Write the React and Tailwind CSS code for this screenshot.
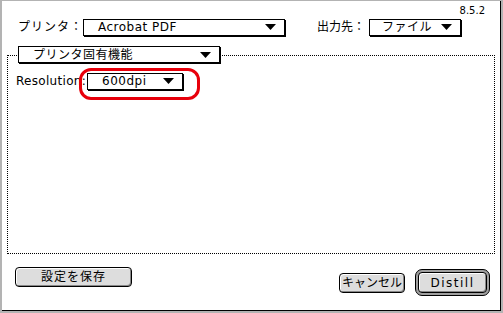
import React from "react";

const FONT = { fontFamily: '"DejaVu Sans", "Noto Sans CJK JP", sans-serif' };

function Tri() {
  return (
    <svg width="11" height="6" viewBox="0 0 11 6" className="shrink-0">
      <polygon points="0,0 11,0 5.5,6" fill="black" />
    </svg>
  );
}

// Mac OS classic popup menu: black frame with a 1px drop shadow
function Popup({ label, width, textPad = 14 }) {
  return (
    <div
      className="h-[17px] border border-black bg-white shadow-[1px_1px_0_#000] flex items-center justify-between pr-[8px] text-[12px] leading-none tracking-[0.5px]"
      style={{ width, paddingLeft: textPad }}
    >
      <span className="whitespace-nowrap">{label}</span>
      <Tri />
    </div>
  );
}

function Button({ children, className = "" }) {
  return (
    <div
      className={
        "h-[20px] border border-black rounded-[4px] bg-[#dddddd] shadow-[inset_1px_1px_0_#ffffff,inset_-1px_-1px_0_#888888] flex items-center justify-center text-[12px] leading-none whitespace-nowrap " +
        className
      }
    >
      {children}
    </div>
  );
}

export default function App() {
  return (
    <div className="w-[503px] h-[313px] bg-[#b3b3b3] pt-px pl-[2px] pr-[2px] pb-[2px]" style={FONT}>
      <div className="h-full bg-white border-r border-b border-black flex flex-col text-black">
        {/* version */}
        <div className="h-[17px] flex justify-end items-start pr-[15px] pt-[5px] text-[10px] leading-none">8.5.2</div>

        {/* printer / destination row */}
        <div className="flex items-center h-[18px] pl-[16px]">
          <span className="text-[12px] w-[65px] tracking-[1px] whitespace-nowrap">プリンタ：</span>
          <Popup label="Acrobat PDF" width={202} />
          <span className="text-[12px] ml-[32px] w-[52px] whitespace-nowrap">出力先：</span>
          <Popup label="ファイル" width={92} textPad={12} />
        </div>

        {/* group box */}
        <div className="ml-[5px] mr-[5px] mt-[19px] h-[199px] border border-dotted border-black">
          <div className="-mt-[10px] ml-[10px]">
            <Popup label="プリンタ固有機能" width={202} textPad={14} />
          </div>
          <div className="flex items-center mt-[9px] pl-[8px]">
            <span className="text-[12px] w-[71px] whitespace-nowrap tracking-[0.3px]">Resolution:</span>
            <div className="relative">
              <Popup label="600dpi" width={96} textPad={14} />
              <div className="absolute -left-[8px] -top-[5px] -right-[17px] -bottom-[10px] border-[3px] border-[#e8000b] rounded-[12px]" />
            </div>
          </div>
        </div>

        {/* buttons */}
        <div className="flex pl-[13px]">
          <Button className="w-[117px] mt-[13px] tracking-[1px]">設定を保存</Button>
          <Button className="w-[66px] mt-[19px] ml-[207px]">キャンセル</Button>
          <div className="ml-[10px] mt-[15px] w-[75px] h-[27px] border border-black rounded-[7px] bg-[#a0a0a0] p-[2px]">
            <Button className="w-full h-full tracking-[1.5px]">Distill</Button>
          </div>
        </div>
      </div>
    </div>
  );
}
